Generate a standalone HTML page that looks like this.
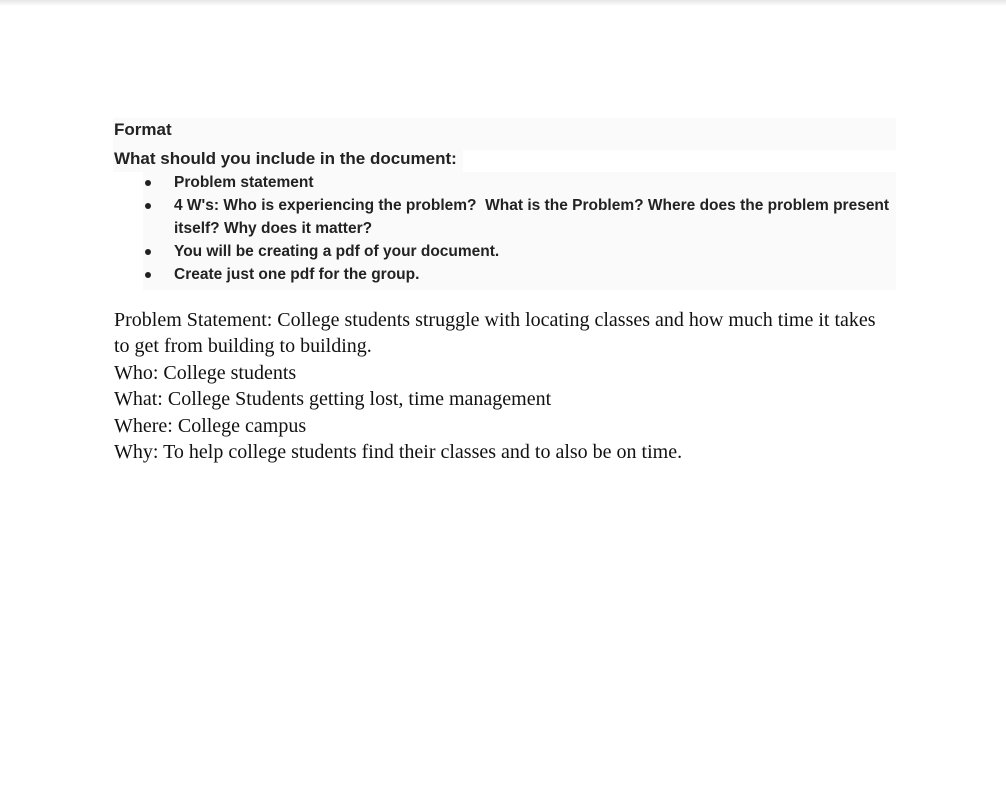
<!DOCTYPE html>
<html><head><style>
body{margin:0;width:1006px;height:791px;background:#fff;position:relative;overflow:hidden;font-family:"Liberation Sans",sans-serif;}
.shadow{position:absolute;left:0;top:0;width:1006px;height:6px;background:linear-gradient(#e6e6e6,#fff);}
.bg{position:absolute;background:#fafafa;}
.t{position:absolute;white-space:nowrap;color:#222;font-weight:bold;}
.h{font-size:17px;}
.li{font-size:15.5px;left:174px;}
.b{position:absolute;left:145px;width:6px;height:6px;border-radius:50%;background:#222;}
.s{position:absolute;left:114px;font-family:"Liberation Serif",serif;font-size:20px;color:#111;white-space:nowrap;}
</style></head><body>
<div class="shadow"></div>
<div class="bg" style="left:113px;top:118px;width:783px;height:32px"></div>
<div class="bg" style="left:113px;top:150px;width:350px;height:22px"></div>
<div class="bg" style="left:143px;top:172px;width:753px;height:118px"></div>
<div class="t h" style="left:114px;top:120px">Format</div>
<div class="t h" style="left:114px;top:149px">What should you include in the document:</div>
<div class="b" style="top:180px"></div><div class="t li" style="top:174px">Problem statement</div>
<div class="b" style="top:203px"></div><div class="t li" style="top:197px">4 W's: Who is experiencing the problem?&nbsp; What is the Problem? Where does the problem present</div>
<div class="t li" style="top:220px">itself? Why does it matter?</div>
<div class="b" style="top:249px"></div><div class="t li" style="top:243px">You will be creating a pdf of your document.</div>
<div class="b" style="top:272px"></div><div class="t li" style="top:266px">Create just one pdf for the group.</div>
<div class="s" style="top:309px">Problem Statement: College students struggle with locating classes and how much time it takes</div>
<div class="s" style="top:335px">to get from building to building.</div>
<div class="s" style="top:362px">Who: College students</div>
<div class="s" style="top:388px">What: College Students getting lost, time management</div>
<div class="s" style="top:415px">Where: College campus</div>
<div class="s" style="top:441px">Why: To help college students find their classes and to also be on time.</div>
</body></html>
